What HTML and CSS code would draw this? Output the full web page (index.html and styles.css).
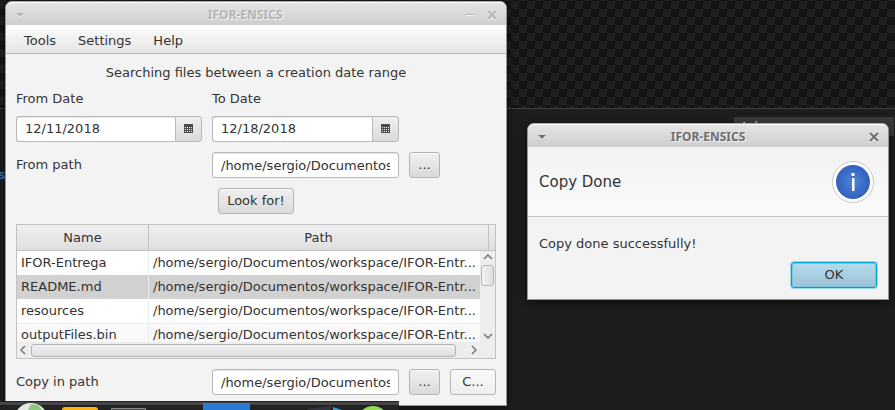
FILE: index.html
```html
<!DOCTYPE html>
<html lang="en">
<head>
<meta charset="utf-8">
<title>IFOR-ENSICS</title>
<link rel="stylesheet" href="styles.css">
</head>
<body>
<div class="desktop">
  <div class="wallpaper"></div>
  <div class="behind-tab">Ashes</div>
  <span class="behind-text">so</span>

  <main class="window main-window">
    <header class="titlebar inactive">
      <svg class="tb-icon" viewBox="0 0 10 10"><path class="glyph" d="M1 3h8L5 7z"/></svg>
      <h1>IFOR-ENSICS</h1>
      <svg class="tb-icon" viewBox="0 0 10 10"><path class="line" d="M1 4.5h8"/></svg>
      <svg class="tb-icon" viewBox="0 0 10 10"><path class="stroke" d="M1 1l8 8M9 1l-8 8"/></svg>
    </header>
    <nav class="menubar">
      <button type="button">Tools</button>
      <button type="button">Settings</button>
      <button type="button">Help</button>
    </nav>
    <form class="content">
      <p class="heading">Searching files between a creation date range</p>
      <div class="dates">
        <div class="field">
          <label for="from-date">From Date</label>
          <div class="picker">
            <input id="from-date" type="text" value="12/11/2018">
            <button type="button" aria-label="Pick from date"><svg viewBox="0 0 9 10"><path class="cal" d="M0 0h9v9H0z"/><path class="cal-dots" d="M1 3.5h7M1 5.5h7M1 7.5h7"/></svg></button>
          </div>
        </div>
        <div class="field">
          <label for="to-date">To Date</label>
          <div class="picker">
            <input id="to-date" type="text" value="12/18/2018">
            <button type="button" aria-label="Pick to date"><svg viewBox="0 0 9 10"><path class="cal" d="M0 0h9v9H0z"/><path class="cal-dots" d="M1 3.5h7M1 5.5h7M1 7.5h7"/></svg></button>
          </div>
        </div>
      </div>
      <div class="row">
        <label for="from-path">From path</label>
        <input id="from-path" class="text" type="text" value="/home/sergio/Documentos">
        <button type="button" class="btn dots">...</button>
      </div>
      <button type="button" class="btn look">Look for!</button>
      <div class="results">
        <table>
          <thead><tr><th class="name">Name</th><th>Path</th><th class="corner"></th></tr></thead>
          <tbody>
            <tr><td>IFOR-Entrega</td><td colspan="2">/home/sergio/Documentos/workspace/IFOR-Entr...</td></tr>
            <tr class="selected"><td>README.md</td><td colspan="2">/home/sergio/Documentos/workspace/IFOR-Entr...</td></tr>
            <tr><td>resources</td><td colspan="2">/home/sergio/Documentos/workspace/IFOR-Entr...</td></tr>
            <tr class="odd"><td>outputFiles.bin</td><td colspan="2">/home/sergio/Documentos/workspace/IFOR-Entr...</td></tr>
          </tbody>
        </table>
        <div class="vbar">
          <svg viewBox="0 0 10 6"><path d="M1 5l4-4 4 4"/></svg>
          <div class="thumb"></div>
          <svg viewBox="0 0 10 6"><path d="M1 1l4 4 4-4"/></svg>
        </div>
        <div class="hbar">
          <svg viewBox="0 0 6 10"><path d="M5 1L1 5l4 4"/></svg>
          <div class="thumb"></div>
          <svg viewBox="0 0 6 10"><path d="M1 1l4 4-4 4"/></svg>
        </div>
      </div>
      <div class="row">
        <label for="copy-path">Copy in path</label>
        <input id="copy-path" class="text" type="text" value="/home/sergio/Documentos">
        <button type="button" class="btn dots">...</button>
        <button type="button" class="btn copy">C...</button>
      </div>
    </form>
  </main>

  <section class="window dialog" role="dialog" aria-labelledby="dialog-title">
    <header class="titlebar">
      <svg class="tb-icon" viewBox="0 0 10 10"><path class="glyph" d="M1 3h8L5 7z"/></svg>
      <h2 id="dialog-title">IFOR-ENSICS</h2>
      <svg class="tb-icon" viewBox="0 0 10 10"><path class="stroke" d="M1 1l8 8M9 1l-8 8"/></svg>
    </header>
    <div class="dialog-head">
      <p>Copy Done</p>
      <svg class="info" viewBox="0 0 42 42">
        <defs><radialGradient id="blue"><stop offset="0" stop-color="#4a86d8"/><stop offset="1" stop-color="#345fbd"/></radialGradient></defs>
        <circle cx="21" cy="21" r="20.5" fill="#fff" stroke="#c9c9c9"/>
        <circle cx="21" cy="21" r="17" fill="url(#blue)"/>
        <path d="M19.5 12h3v3h-3zM20 17h2.500v13h-2.500z" fill="#fff"/>
      </svg>
    </div>
    <div class="dialog-body">
      <p>Copy done successfully!</p>
      <button type="button" class="btn ok">OK</button>
    </div>
  </section>

  <footer class="taskbar">
    <svg viewBox="0 0 399 17">
      <path d="M0 0h399v1H0z" fill="#222"/>
      <path d="M0 1h399v3H0z" fill="#464646"/>
      <circle cx="31" cy="19" r="17" fill="#e4e8e2"/>
      <path d="M31 3l7 1 10 12H38l-10-7z" fill="#8cc87b"/>
      <rect x="62" y="6" width="36" height="16" rx="3" fill="#fbb507"/>
      <path d="M111.500 17V7.500h34V17" fill="#4a4a4a" stroke="#858585"/>
      <path d="M203 2h47v15h-47z" fill="#2a7bd3"/>
      <path d="M307 8l25-3-5 12h-12z" fill="#30343c"/>
      <path d="M333 6l9 3v8h-9z" fill="#3b9bdc"/>
      <circle cx="373" cy="21" r="16" fill="#92dc4c"/>
    </svg>
  </footer>
</div>
</body>
</html>
```
FILE: styles.css
```css
* { box-sizing: border-box; }
body {
  margin: 0;
  font: 13px/16px "DejaVu Sans", sans-serif;
  color: #333;
}
p, h1, h2 { margin: 0; }
button, input { font: inherit; color: inherit; margin: 0; }
.desktop {
  position: relative;
  height: 100vh;
  overflow: hidden;
  background: #1d1d1d;
}
.wallpaper {
  height: 109px;
  border-bottom: 1px solid #404040;
  background: conic-gradient(#1f1f1f 25%, #141414 0 50%, #1f1f1f 0 75%, #141414 0) 7px 1px / 16px 16px;
}
.behind-tab {
  position: absolute;
  left: 734px;
  right: 1px;
  top: 117px;
  height: 19px;
  padding: 2px 0 0 6px;
  background: #3a3a3a;
  color: #ddd;
  font-size: 12px;
}
.behind-text {
  position: absolute;
  left: -2px;
  top: 167px;
  font-weight: bold;
  color: #2a6fb8;
}
.window {
  position: absolute;
  background: #f3f3f3;
  border: 1px solid #929592;
  border-top-color: #aaa;
  border-radius: 7px 7px 0 0;
  box-shadow: 0 3px 10px #0008;
}
.main-window { left: 5px; top: 1px; width: 502px; }
.dialog { left: 527px; top: 123px; width: 362px; }
.titlebar {
  display: flex;
  align-items: center;
  gap: 12px;
  height: 23px;
  padding: 1px 9px 0;
  border-top: 1px solid #fff;
  border-radius: 6px 6px 0 0;
  background: linear-gradient(#e4e4e4, #cecece);
  color: #6e6e6e;
}
.titlebar.inactive { color: #b4b4b4; }
.titlebar h1, .titlebar h2 {
  flex: 1;
  text-align: center;
  font: bold 12px/18px "Noto Sans", sans-serif;
  text-shadow: 1px 1px #f4f4f4;
}
.tb-icon { width: 10px; height: 10px; filter: drop-shadow(0 1px #f4f4f4); }
.glyph { fill: currentColor; }
.stroke { fill: none; stroke: currentColor; stroke-width: 2; }
.line { stroke: currentColor; }
.menubar {
  display: flex;
  height: 29px;
  padding: 0 10px;
  background: linear-gradient(#fdfdfd, #e5e5e5);
  border-bottom: 1px solid #b5b5b5;
}
.menubar button { border: 0; background: none; padding: 3px 8px 0; }
.menubar button + button { margin-left: 6px; }
.content {
  display: flex;
  flex-direction: column;
  padding: 11px 10px 10px;
}
.heading { text-align: center; }
.dates { display: flex; gap: 10px; margin-top: 10px; }
.field { display: flex; flex-direction: column; gap: 9px; width: 187px; }
.picker { display: flex; height: 26px; }
.field:first-child { width: 186px; }
input {
  min-width: 0;
  height: 26px;
  padding: 0 8px;
  border: 1px solid #b8b8b8;
  border-radius: 3px;
  background: #fff;
  box-shadow: inset 0 1px 1px #e6e6e6;
}
.picker input { flex: 1; padding-bottom: 2px; border-right: 0; border-radius: 3px 0 0 3px; }
.picker button {
  display: grid;
  place-items: center;
  width: 27px;
  padding: 0;
  border: 1px solid #b8b8b8;
  border-radius: 0 3px 3px 0;
  background: linear-gradient(#efefef, #dadada);
}
.picker svg { width: 9px; height: 10px; shape-rendering: crispEdges; }
.cal { fill: #4a4a4a; }
.cal-dots { stroke: #eee; stroke-dasharray: 1 1; }
.row {
  display: grid;
  grid-template-columns: 186px 187px 31px 46px;
  gap: 10px;
  align-items: center;
  margin-top: 10px;
}
.btn {
  height: 26px;
  padding: 0;
  border: 1px solid #b5b5b5;
  border-radius: 3px;
  background: linear-gradient(#f0f0f0, #dadada);
  box-shadow: inset 0 1px #f8f8f8;
}
.look { align-self: center; width: 76px; margin: 10px 0; }
.copy { background: linear-gradient(#fafafa, #eee); }
.results {
  display: grid;
  grid-template-columns: 1fr 15px;
  grid-template-rows: 26px 91px 16px;
  border: 1px solid #c2c2c2;
  background: #ededed;
}
table {
  grid-area: 1 / 1 / 3 / 3;
  display: block;
  height: 117px;
  overflow: hidden;
  border-collapse: separate;
  border-spacing: 0;
}
thead, tbody { display: block; }
tr { display: grid; grid-template-columns: 132px 1fr 6px; height: 24px; background: #fff; }
thead tr { height: 26px; background: linear-gradient(#efefef, #dedede); }
th {
  padding: 5px 0 0;
  font-weight: normal;
  border-right: 1px solid #c2c2c2;
  border-bottom: 1px solid #c2c2c2;
}
th.corner { border-right: 0; }
td { padding: 4px; white-space: nowrap; border-right: 1px solid #ececec; }
td + td { grid-column: span 2; border: 0; }
.odd { background: #f9f9f9; box-shadow: inset 0 1px #ededed; }
.selected { background: #d1d1d1; }
.vbar {
  grid-area: 2 / 2;
  display: flex;
  flex-direction: column;
  align-items: center;
  padding: 3px 0;
  background: #ededed;
}
.vbar svg { width: 10px; height: 6px; }
.hbar svg { width: 6px; height: 10px; }
.vbar path, .hbar path { fill: none; stroke: #777; stroke-width: 1.500; }
.thumb {
  border: 1px solid #b5b5b5;
  border-radius: 3px;
  background: linear-gradient(90deg, #f3f3f3, #dedede);
}
.vbar .thumb { width: 13px; height: 21px; margin: 5px 0 auto; }
.hbar {
  grid-area: 3 / 1;
  display: flex;
  align-items: center;
  padding: 0 3px;
  background: #ededed;
}
.hbar .thumb { flex: 1; height: 13px; margin: 0 15px 0 5px; background: linear-gradient(#f3f3f3, #dedede); }
.dialog-head {
  display: flex;
  justify-content: space-between;
  align-items: center;
  height: 70px;
  padding: 0 14px 0 11px;
  font-size: 15px;
  background: linear-gradient(#f2f2f2, #fbfbfb);
  border-bottom: 1px solid #c6c6c6;
}
.info { width: 42px; height: 42px; }
.dialog-body { display: flex; flex-direction: column; padding: 19px 11px 11px; }
.ok {
  align-self: flex-end;
  width: 86px;
  margin-top: 10px;
  border: 1px solid #039ed3;
  background: linear-gradient(#b3dced, #9cc3d6);
  box-shadow: 0 0 0 1px #9bd9ee, inset 0 0 0 1px #7fc4de;
}
.taskbar { position: absolute; left: 0; bottom: 0; width: 399px; height: 9px; background: #222; }
.taskbar svg { display: block; width: 100%; }
```
